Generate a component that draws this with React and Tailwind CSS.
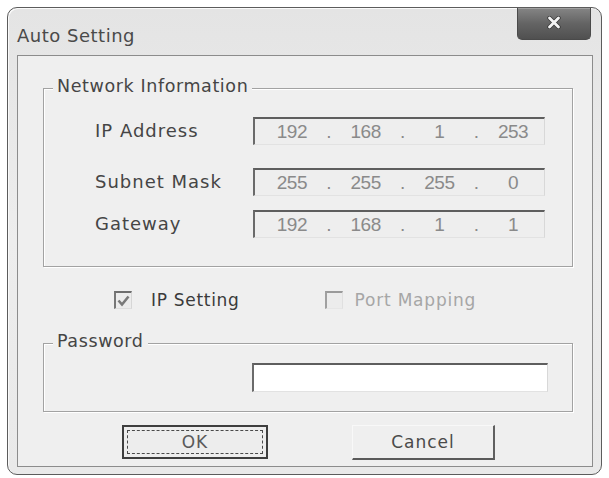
import React, { Fragment } from "react";

const sans = "font-['DejaVu_Sans',sans-serif]";

function IPField({ vals }) {
  return (
    <div className="flex h-[28px] w-[292px] items-center border-t-2 border-l-2 border-b border-r border-t-[#5e5e5e] border-l-[#6a6a6a] border-b-[#e2e2e2] border-r-[#d8d8d8] bg-[#eeeeee] pl-[6px] font-['Liberation_Sans',sans-serif] text-[19px] leading-none tracking-[-0.5px] text-[#8a8a8a]">
      {vals.map((v, i) => (
        <Fragment key={i}>
          <span className="w-[62px] text-center">{v}</span>
          {i < 3 && <span className="w-[12px] text-center">.</span>}
        </Fragment>
      ))}
    </div>
  );
}

function Row({ label, vals, className = "" }) {
  return (
    <div className={`flex items-center pl-[51px] ${className}`}>
      <span className={`w-[158px] text-[18px] leading-none tracking-[1px] text-[#454545] ${sans}`}>{label}</span>
      <IPField vals={vals} />
    </div>
  );
}

function Legend({ children }) {
  return (
    <span
      className={`absolute -top-[13px] left-[9px] bg-[#efefef] px-[4px] text-[17.5px] leading-[20px] tracking-[0.6px] text-[#454545] ${sans}`}
    >
      {children}
    </span>
  );
}

function CheckBox({ checked, disabled }) {
  return (
    <span
      className={`flex h-[18px] w-[18px] items-center justify-center border-t-2 border-l-2 border-b border-r ${
        disabled
          ? "border-t-[#9a9a9a] border-l-[#a0a0a0] border-b-[#e6e6e6] border-r-[#e0e0e0]"
          : "border-t-[#6e6e6e] border-l-[#777777] border-b-[#dedede] border-r-[#d6d6d6]"
      } bg-[#ececec]`}
    >
      {checked && (
        <svg width="13" height="12" viewBox="0 0 13 12">
          <path d="M1.5 5.5 L5 9.5 L11.5 1.5" fill="none" stroke="#7a7a7a" strokeWidth="2.6" />
        </svg>
      )}
    </span>
  );
}

export default function App() {
  return (
    <div className="h-[478px] w-[609px] overflow-hidden bg-white pl-[7px] pt-[7px]">
      <div className="flex h-[468px] w-[595px] flex-col rounded-[10px] border border-[#5c5c5c] bg-gradient-to-b from-[#e4e4e4] via-[#ededed] to-[#e9e9e9] px-[9px] pb-[7px] shadow-[inset_1px_1px_0_#fafafa]">
        {/* title bar */}
        <div className="flex h-[47px] shrink-0 items-start justify-between">
          <span className={`mt-[16px] text-[18px] leading-[24px] tracking-[0.5px] text-[#4a4a4a] ${sans}`}>
            Auto Setting
          </span>
          <div className="mr-[1px] flex h-[32px] w-[74px] items-center justify-center rounded-b-[5px] border border-t-0 border-[#4a4a4a] bg-gradient-to-b from-[#858585] via-[#646464] to-[#505050] shadow-[inset_0_1px_0_#a0a0a0]">
            <svg width="14" height="13" viewBox="0 0 14 13" className="-mt-[3px]">
              <path d="M2.5 2 L11.5 11 M11.5 2 L2.5 11" stroke="#3a3a3a" strokeWidth="4.4" strokeLinecap="round" />
              <path d="M2.5 2 L11.5 11 M11.5 2 L2.5 11" stroke="#f4f4f4" strokeWidth="2.8" strokeLinecap="round" />
            </svg>
          </div>
        </div>

        {/* client area */}
        <div className="flex h-[412px] w-[576px] flex-col border border-[#8c8c8c] bg-[#efefef]">
          {/* Network Information group */}
          <div className="relative ml-[25px] mt-[32px] h-[179px] w-[530px] border border-[#a2a2a2] pt-[28px] shadow-[inset_1px_1px_0_#ffffff,1px_1px_0_#ffffff]">
            <Legend>Network Information</Legend>
            <Row label="IP Address" vals={["192", "168", "1", "253"]} />
            <Row label="Subnet Mask" vals={["255", "255", "255", "0"]} className="mt-[23px]" />
            <Row label="Gateway" vals={["192", "168", "1", "1"]} className="mt-[14px]" />
          </div>

          {/* check boxes */}
          <div className="mt-[23px] flex h-[20px] items-center pl-[96px]">
            <CheckBox checked />
            <span className={`ml-[19px] text-[17px] leading-none tracking-[0.7px] text-[#3a3a3a] ${sans}`}>IP Setting</span>
            <span className="ml-[85px]">
              <CheckBox disabled />
            </span>
            <span className={`ml-[12px] text-[17px] leading-none tracking-[0.8px] text-[#a6a6a6] ${sans}`}>Port Mapping</span>
          </div>

          {/* Password group */}
          <div className="relative ml-[25px] mt-[33px] h-[69px] w-[530px] border border-[#a2a2a2] pl-[208px] pt-[19px] shadow-[inset_1px_1px_0_#ffffff,1px_1px_0_#ffffff]">
            <Legend>Password</Legend>
            <div className="h-[29px] w-[296px] border-t-2 border-l-2 border-b border-r border-t-[#5e5e5e] border-l-[#6a6a6a] border-b-[#e2e2e2] border-r-[#d8d8d8] bg-white" />
          </div>

          {/* buttons */}
          <div className="mt-[13px] flex items-start pl-[104px]">
            <div className="flex h-[34px] w-[146px] items-center justify-center border-2 border-[#3e3e3e] bg-[#ededed] p-[3px]">
              <div className={`flex h-full w-full items-center justify-center border border-dashed border-[#4a4a4a] text-[17px] leading-none tracking-[1px] text-[#5a5a5a] ${sans}`}>
                OK
              </div>
            </div>
            <div className={`ml-[84px] flex h-[35px] w-[143px] items-center justify-center border-t border-l border-b-2 border-r-2 border-t-[#f8f8f8] border-l-[#f8f8f8] border-b-[#5a5a5a] border-r-[#606060] bg-[#efefef] text-[17px] leading-none tracking-[1px] text-[#4a4a4a] ${sans}`}>
              Cancel
            </div>
          </div>
        </div>
      </div>
    </div>
  );
}
